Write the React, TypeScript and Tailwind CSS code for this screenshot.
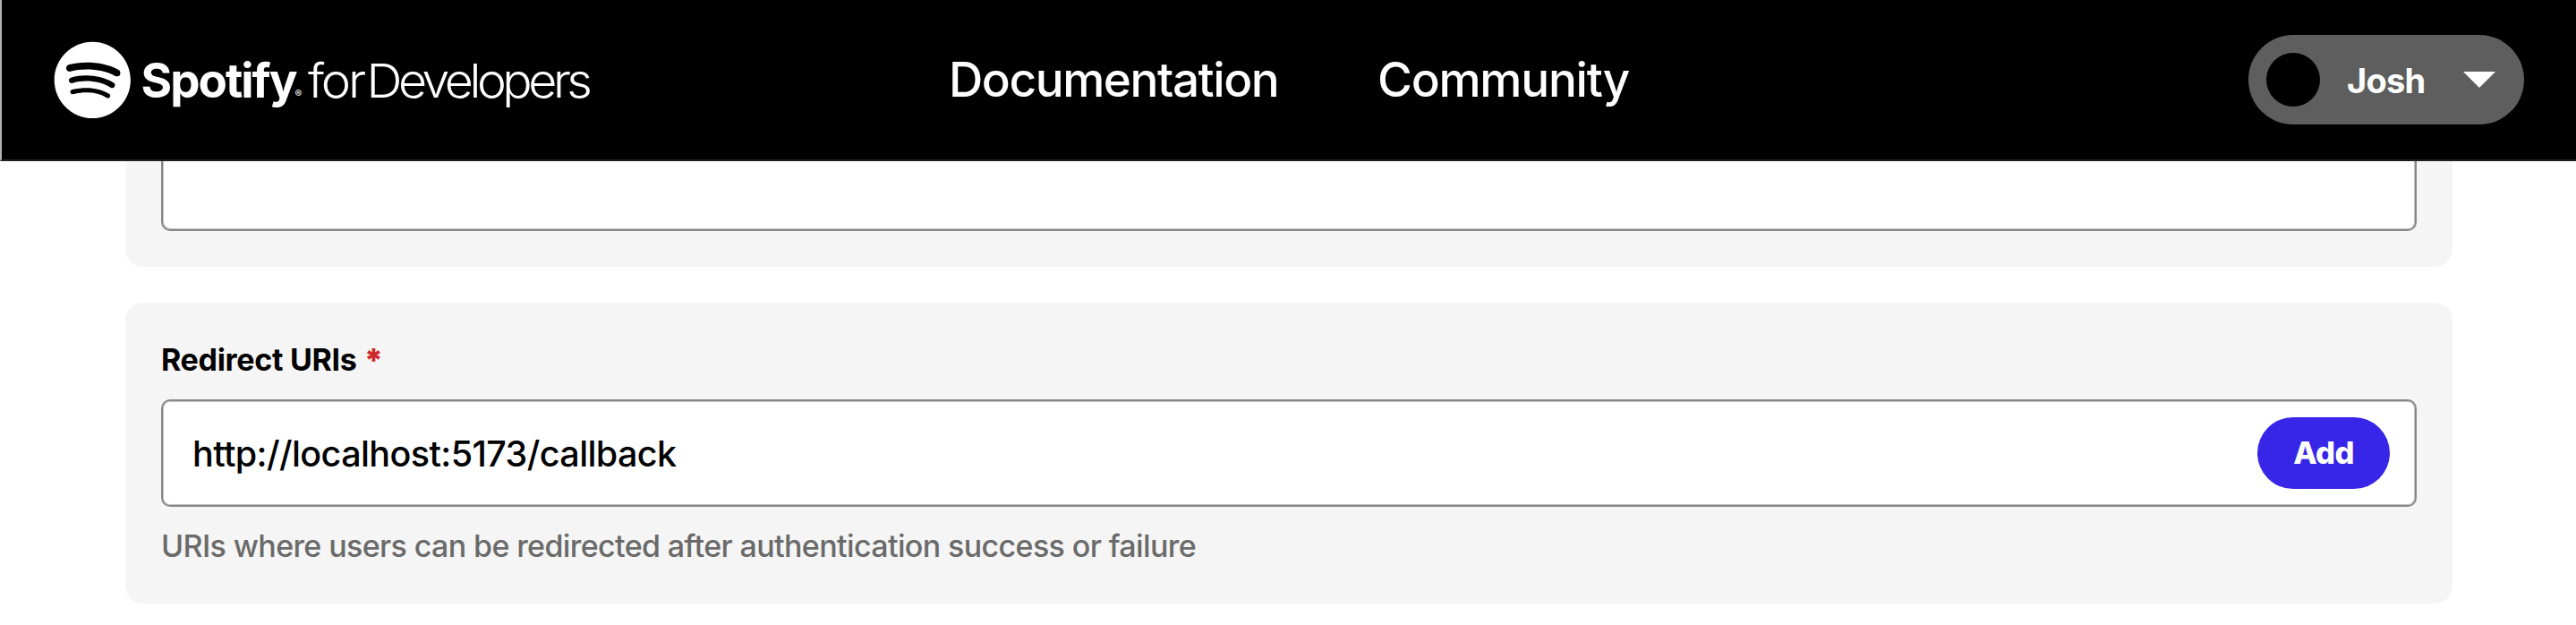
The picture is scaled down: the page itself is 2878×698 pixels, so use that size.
import React from "react";

function Logo() {
  return (
    <svg className="block h-[100px] w-[620px] shrink-0" viewBox="0 0 620 100" fill="#fff" aria-label="Spotify for Developers">
      <g transform="translate(0.7 6.8) scale(3.55)">
        <path d="M12 0C5.4 0 0 5.4 0 12s5.4 12 12 12 12-5.4 12-12S18.66 0 12 0zm5.521 17.34c-.24.359-.66.48-1.021.24-2.82-1.74-6.36-2.101-10.561-1.141-.418.122-.779-.179-.899-.539-.12-.421.18-.78.54-.9 4.56-1.021 8.52-.6 11.64 1.32.42.18.479.659.301 1.02zm1.44-3.3c-.301.42-.841.6-1.262.3-3.239-1.98-8.159-2.58-11.939-1.38-.479.12-1.02-.12-1.14-.6-.12-.48.12-1.021.6-1.141C9.6 9.9 15 10.561 18.72 12.84c.361.181.54.78.241 1.2zm.12-3.36C15.24 8.4 8.82 8.16 5.16 9.301c-.6.179-1.2-.181-1.38-.721-.18-.601.18-1.2.72-1.381 4.26-1.26 11.28-1.02 15.721 1.621.539.3.719 1.02.419 1.56-.299.421-1.02.599-1.559.3z" />
      </g>
      <g fontFamily="Inter, 'Liberation Sans', sans-serif">
        <text x="97.5" y="68.5" fontSize="53" fontWeight="750" letterSpacing="-2" textLength="173" lengthAdjust="spacingAndGlyphs">Spotify</text>
        <text x="269.5" y="68.5" fontSize="11.5" fontWeight="400">®</text>
        <text x="284" y="68.5" fontSize="53" fontWeight="300" letterSpacing="-3" textLength="62" lengthAdjust="spacingAndGlyphs">for</text>
        <text x="349.5" y="68.5" fontSize="52" fontWeight="300" letterSpacing="-4.2" textLength="248" lengthAdjust="spacingAndGlyphs">Developers</text>
      </g>
    </svg>
  );
}

function Header() {
  return (
    <header className="flex h-[180px] items-start border-b-2 border-l-2 border-b-[#231f20] border-l-[#b3b3b3] bg-black pl-[58px] pr-[58px] text-white">
      <div className="mt-[40px]">
        <Logo />
      </div>
      <nav className="ml-[380px] mt-[57px] flex gap-[111px] text-[53px] font-medium leading-[64px]">
        <a className="w-[368px] whitespace-nowrap tracking-[-1.4px]">Documentation</a>
        <a className="whitespace-nowrap tracking-[-1.2px]">Community</a>
      </nav>
      <button className="ml-auto mt-[39px] flex h-[100px] w-[308px] items-center rounded-full bg-[#5e5e5e] pl-5">
        <span className="size-[60px] rounded-full bg-black" />
        <span className="ml-[30px] mt-[2px] w-[130px] text-left text-[38px] font-bold leading-[50px] tracking-[-0.8px]">Josh</span>
        <svg className="h-[18px] w-[36px]" viewBox="0 0 36 18" fill="#fff">
          <path d="M0 0h36L18 18z" />
        </svg>
      </button>
    </header>
  );
}

export default function App() {
  return (
    <div className="h-[698px] w-full overflow-hidden bg-white font-['Inter','Liberation_Sans',sans-serif] text-black">
      <Header />
      <main className="flex flex-col gap-10 pl-[140px] pr-[138px]">
        <section className="h-[118px] rounded-b-[20px] bg-[#f5f5f5] px-10">
          <div className="h-[78px] rounded-b-[10px] border-x-2 border-b-2 border-[#878787] bg-white shadow-[inset_1px_-1px_0_#c3c3c3,inset_-1px_0_0_#c3c3c3]" />
        </section>
        <section className="h-[336px] rounded-[20px] bg-[#f5f5f5] px-10 pt-[40px]">
          <label className="flex h-[48px] gap-[8px] text-[34px] font-bold leading-[48px]">
            <span className="whitespace-nowrap tracking-[-0.3px]">Redirect URIs</span>
            <span className="text-[36px] font-black text-[#cd2b2b]">*</span>
          </label>
          <div className="mt-[20px] flex h-[120px] items-center justify-between rounded-[10px] border-2 border-[#878787] bg-white pl-[33px] pr-[28px] shadow-[inset_0_0_0_1px_#c3c3c3]">
            <span className="whitespace-nowrap pt-[2px] text-[39.5px] font-[450] leading-[50px] tracking-[-0.6px]">http://localhost:5173/callback</span>
            <button className="h-20 w-[148px] rounded-full bg-[#3726e8] text-[34.5px] font-extrabold leading-[80px] tracking-[-0.6px] text-white">Add</button>
          </div>
          <p className="mt-[20px] whitespace-nowrap text-[34px] font-[480] leading-[48px] tracking-[-0.62px] text-[#6a6a6a]">
            URIs where users can be redirected after authentication success or failure
          </p>
        </section>
      </main>
    </div>
  );
}
